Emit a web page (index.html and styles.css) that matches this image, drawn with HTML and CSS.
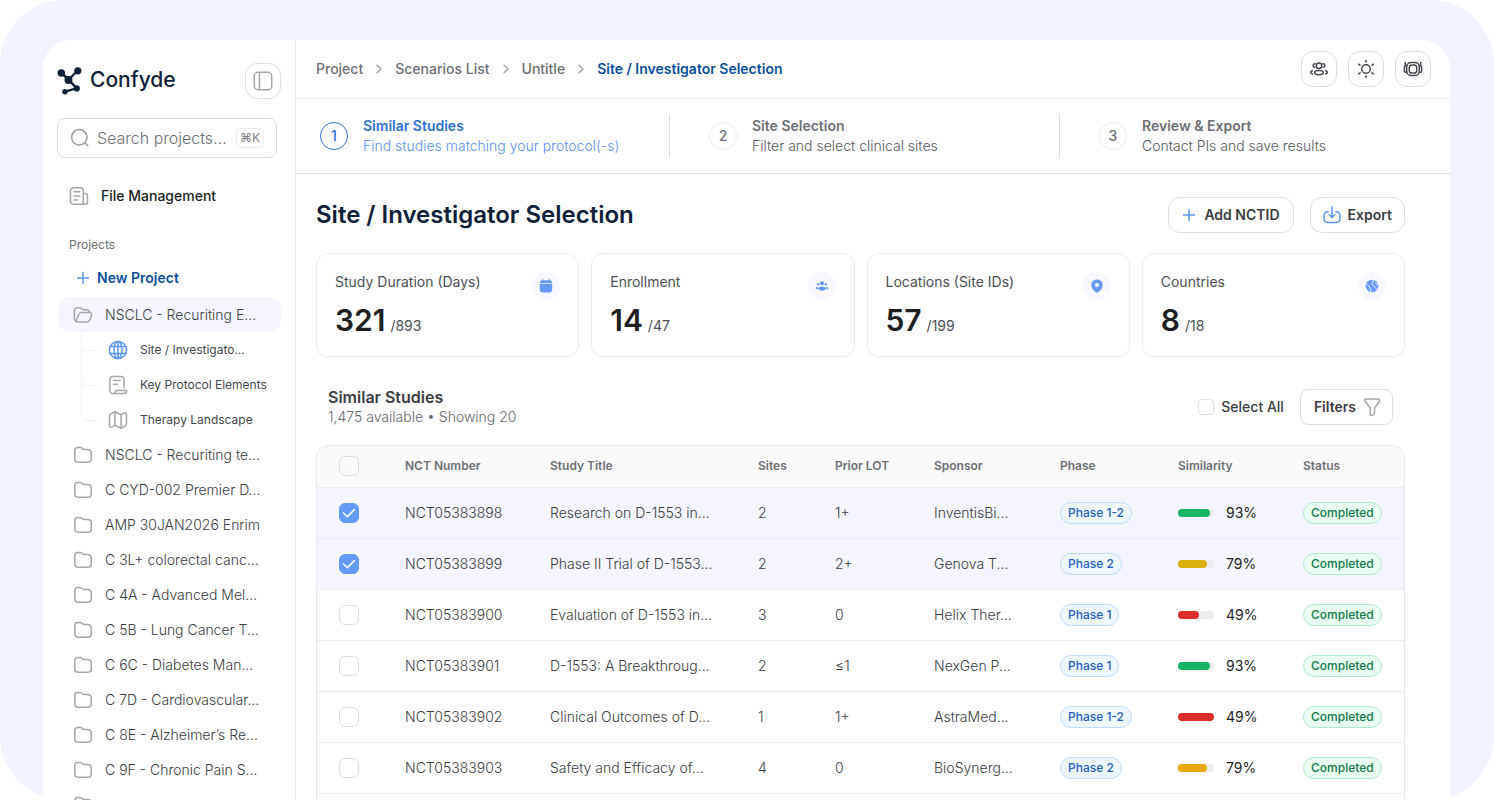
FILE: index.html
```html
<!DOCTYPE html>
<html lang="en">

<head>
  <meta charset="UTF-8" />
  <meta name="viewport" content="width=device-width, initial-scale=1.0" />
  <title>Confyde - Site / Investigator Selection</title>
  <link rel="stylesheet" href="styles.css">
</head>

<body>
  <!-- Shared icons -->
  <svg class="sprite" aria-hidden="true">
    <symbol id="icon-folder" viewBox="0 0 20 20">
      <path d="M1.8 5.6C1.8 3.6 2.9 2.4 4.9 2.4h2.2c1.3 0 1.9.5 2.6 1.3.5.6 1.1.9 2.1.9h2.6c2.4 0 3.9 1.4 3.9 3.8v5c0 2.5-1.4 3.9-3.9 3.9H5.7c-2.5 0-3.9-1.4-3.9-3.9z" />
    </symbol>
    <symbol id="icon-plus" viewBox="0 0 14 14">
      <path d="M7 1.5v11M1.5 7h11" />
    </symbol>
    <symbol id="icon-chevron" viewBox="0 0 8 12">
      <path d="M2 2.200 6 6l-4 3.800" />
    </symbol>
  </svg>

  <div class="frame">
    <div class="app">
      <aside class="sidebar">
        <div class="brand-row">
          <a class="brand" href="#">
            <svg class="brand-mark" viewBox="0 0 26 30" aria-hidden="true">
              <path d="M4.500 7 11.500 13.500 20.500 5M11.500 13.500 19.500 22.300 8 25.600" fill="none" stroke="currentColor" stroke-width="2.400" stroke-linejoin="round" />
              <circle cx="4.300" cy="7" r="3.700" />
              <circle cx="20.800" cy="4.800" r="3.600" />
              <circle cx="11.500" cy="13.900" r="4" />
              <circle cx="19.800" cy="22.400" r="3.100" />
              <circle cx="7.900" cy="25.800" r="2.700" />
            </svg>
            <span>Confyde</span>
          </a>
          <button class="icon-button muted" aria-label="Toggle sidebar">
            <svg class="icon" viewBox="0 0 20 20"><rect x="1.3" y="1.3" width="17.4" height="17.4" rx="3.8" /><path d="M6.500 1.500v17" /></svg>
          </button>
        </div>

        <label class="search">
          <svg class="icon" viewBox="0 0 20 20"><circle cx="9.3" cy="9.3" r="7.7" /><path d="m15 15 2.800 2.800" /></svg>
          <input type="text" placeholder="Search projects..." aria-label="Search projects" />
          <kbd>⌘K</kbd>
        </label>

        <a class="file-link" href="#">
          <svg class="icon" viewBox="0 0 20 20"><path d="M14.2 18.3H4.8c-2 0-3.3-1.2-3.3-3.3V5c0-2.1 1.2-3.3 3.3-3.3h6.1c2.1 0 3.3 1.2 3.3 3.3zM14.2 7.6h1.6c1.8 0 2.7.9 2.7 2.7V16c0 1.4-.8 2.3-2.1 2.3s-2.2-.9-2.2-2.3M5 5.8h5.8M5 9.9h5.8M5 14h3" /></svg>
          File Management
        </a>

        <h2 class="sidebar-heading">Projects</h2>
        <button class="new-project">
          <svg class="plus"><use href="#icon-plus" /></svg>
          New Project
        </button>

        <ul class="project-list">
          <li>
            <a class="project active" href="#">
              <svg class="icon" viewBox="0 0 20 20"><path d="M2.6 16.2C1.8 15.6 1.4 14.600 1.4 13.2V6c0-2 1-3.200 3-3.200h2.200c1 0 1.600.4 2.100 1.100.4.6.9.8 1.700.8h2.800c2.100 0 3.300 1 3.300 2.800M2.700 16.300c.5.400 1.200.6 2.100.6h9c1.700 0 2.600-.8 3.200-2.400l1.400-3.800c.7-2-.1-3.200-2-3.200H8.700c-1.600 0-2.500.7-3 2.200z" /></svg>
              NSCLC - Recuriting E...
            </a>
            <ul class="subnav">
              <li>
                <a class="current" href="#">
                  <svg class="icon" viewBox="0 0 20 20"><circle cx="10" cy="10" r="8.600" /><ellipse cx="10" cy="10" rx="4" ry="8.600" /><path d="M2.200 6.600h15.600M2.200 13.400h15.600M10 1.400v17.200" /></svg>
                  Site / Investigato...
                </a>
              </li>
              <li>
                <a href="#">
                  <svg class="icon" viewBox="0 0 20 20"><path d="M16 12.600V4.800C16 2.700 14.900 1.500 12.800 1.500H5.100C3 1.500 1.900 2.700 1.900 4.800v10.400c0 2.100 1.100 3.300 3.200 3.300M5.100 18.500c1.600 0 2.500-.8 2.500-2.300v-.8h11v.6c0 1.600-.9 2.500-2.500 2.500zM5.400 5.600h6.800M5.400 9.200h4" /></svg>
                  Key Protocol Elements
                </a>
              </li>
              <li>
                <a href="#">
                  <svg class="icon" viewBox="0 0 20 20"><path d="M1.500 6.300v8.900c0 2 1.200 2.500 2.700 1.700l2.700-1.600 6.200 3 4-2.200c1-.6 1.400-1.300 1.400-2.400V4.900c0-2-1.200-2.600-2.700-1.800l-2.700 1.600-6.200-3-4 2.200c-1 .6-1.400 1.300-1.400 2.400zM6.900 2v13.100M13.100 5v13" /></svg>
                  Therapy Landscape
                </a>
              </li>
            </ul>
          </li>
          <li><a class="project" href="#"><svg class="icon"><use href="#icon-folder" /></svg>NSCLC - Recuriting te...</a></li>
          <li><a class="project" href="#"><svg class="icon"><use href="#icon-folder" /></svg>C CYD-002 Premier D...</a></li>
          <li><a class="project" href="#"><svg class="icon"><use href="#icon-folder" /></svg>AMP 30JAN2026 Enrim</a></li>
          <li><a class="project" href="#"><svg class="icon"><use href="#icon-folder" /></svg>C 3L+ colorectal canc...</a></li>
          <li><a class="project" href="#"><svg class="icon"><use href="#icon-folder" /></svg>C 4A - Advanced Mel...</a></li>
          <li><a class="project" href="#"><svg class="icon"><use href="#icon-folder" /></svg>C 5B - Lung Cancer T...</a></li>
          <li><a class="project" href="#"><svg class="icon"><use href="#icon-folder" /></svg>C 6C - Diabetes Man...</a></li>
          <li><a class="project" href="#"><svg class="icon"><use href="#icon-folder" /></svg>C 7D - Cardiovascular...</a></li>
          <li><a class="project" href="#"><svg class="icon"><use href="#icon-folder" /></svg>C 8E - Alzheimer’s Re...</a></li>
          <li><a class="project" href="#"><svg class="icon"><use href="#icon-folder" /></svg>C 9F - Chronic Pain S...</a></li>
          <li><a class="project" href="#"><svg class="icon"><use href="#icon-folder" /></svg></a></li>
        </ul>
      </aside>

      <div class="main">
        <header class="topbar">
          <nav class="breadcrumbs" aria-label="Breadcrumb">
            <a href="#">Project</a>
            <svg class="chevron"><use href="#icon-chevron" /></svg>
            <a href="#">Scenarios List</a>
            <svg class="chevron"><use href="#icon-chevron" /></svg>
            <a href="#">Untitle</a>
            <svg class="chevron"><use href="#icon-chevron" /></svg>
            <a class="current" href="#">Site / Investigator Selection</a>
          </nav>
          <div class="topbar-actions">
            <button class="icon-button" aria-label="Team">
              <svg class="icon" viewBox="0 0 20 20"><circle cx="10" cy="6.700" r="2.800" /><ellipse cx="10" cy="13.600" rx="4.400" ry="2.200" /><path d="M6 4.800C3.700 4.700 3.400 7.800 5.500 8.300M14 4.800c2.300-.1 2.600 3 .5 3.500M3.400 11.800c-2.300.5-2.300 2.600 0 3.100M16.600 11.800c2.300.5 2.300 2.600 0 3.100" /></svg>
            </button>
            <button class="icon-button" aria-label="Theme">
              <svg class="icon" viewBox="0 0 20 20"><circle cx="10" cy="10" r="4.300" /><path d="M10 1.500v1.500M10 17v1.500M2.600 5.200l1.500.9M15.900 13.900l1.500.9M2.600 14.800l1.500-.9M15.900 6.100l1.500-.9" /></svg>
            </button>
            <button class="icon-button" aria-label="Account">
              <svg class="icon" viewBox="0 0 20 20"><rect x="3.700" y="3.500" width="12.600" height="13" rx="4.300" /><rect x="6.300" y="6" width="7.400" height="8" rx="2.600" /><path d="M3.700 6.800H2.600C1.800 6.800 1.400 7.300 1.400 8.100v3.800c0 .8.400 1.300 1.200 1.300h1.100M16.300 6.800h1.100c.8 0 1.200.5 1.200 1.300v3.800c0 .8-.4 1.300-1.200 1.300h-1.100M2.300 6.600V3.600M17.700 6.600V3.600" /></svg>
            </button>
          </div>
        </header>

        <ol class="stepper">
          <li class="step active">
            <span class="step-number">1</span>
            <div>
              <h3>Similar Studies</h3>
              <p>Find studies matching your protocol(-s)</p>
            </div>
          </li>
          <li class="step">
            <span class="step-number">2</span>
            <div>
              <h3>Site Selection</h3>
              <p>Filter and select clinical sites</p>
            </div>
          </li>
          <li class="step">
            <span class="step-number">3</span>
            <div>
              <h3>Review &amp; Export</h3>
              <p>Contact PIs and save results</p>
            </div>
          </li>
        </ol>

        <main class="content">
          <div class="title-row">
            <h1>Site / Investigator Selection</h1>
            <div class="title-actions">
              <button class="button">
                <svg class="plus"><use href="#icon-plus" /></svg>
                Add NCTID
              </button>
              <button class="button export">
                <svg class="icon" viewBox="0 0 20 20"><path d="M6.200 6.800C3.600 6.700 2.100 8.200 2.100 10.800v2.400c0 2.900 1.500 4.400 4.400 4.400h7c2.900 0 4.400-1.500 4.400-4.400v-2.400c0-2.600-1.500-4.100-4.100-4M10 1.800v10.500M7.200 9.800l2.800 2.700 2.800-2.700" /></svg>
                Export
              </button>
            </div>
          </div>

          <section class="cards">
            <div class="card">
              <div>
                <div class="card-label">Study Duration (Days)</div>
                <div class="card-value"><strong>321</strong> /893</div>
              </div>
              <span class="card-icon">
                <svg viewBox="0 0 14 14"><path d="M.8 4.300C.8 2.500 1.700 1.500 3 1.300V.7a.6.6 0 0 1 1.200 0v.5h5.600V.7a.6.6 0 0 1 1.200 0v.6c1.300.2 2.200 1.200 2.200 3z" /><path d="M.8 5h12.400v5.600c0 2-1.100 3-3.100 3H3.900c-2 0-3.100-1-3.100-3z" /></svg>
              </span>
            </div>
            <div class="card">
              <div>
                <div class="card-label">Enrollment</div>
                <div class="card-value"><strong>14</strong> /47</div>
              </div>
              <span class="card-icon">
                <svg viewBox="0 0 14 14"><circle cx="7" cy="4.200" r="2" /><ellipse cx="7" cy="9.600" rx="3.600" ry="2.100" /><circle cx="3.300" cy="5.200" r="1.200" /><circle cx="10.700" cy="5.200" r="1.200" /><ellipse cx="1.900" cy="9.200" rx="1.300" ry="1.100" /><ellipse cx="12.100" cy="9.200" rx="1.300" ry="1.100" /></svg>
              </span>
            </div>
            <div class="card">
              <div>
                <div class="card-label">Locations (Site IDs)</div>
                <div class="card-value"><strong>57</strong> /199</div>
              </div>
              <span class="card-icon">
                <svg viewBox="0 0 14 14"><path fill-rule="evenodd" d="M7 .4c3.300 0 5.700 2.300 5.700 5.500 0 3.100-2.300 5.500-4.400 7.300-.8.600-1.800.6-2.600 0C3.600 11.400 1.300 9 1.300 5.900 1.300 2.700 3.700.4 7 .4zm0 3.500a2 2 0 1 0 0 4 2 2 0 0 0 0-4z" /></svg>
              </span>
            </div>
            <div class="card">
              <div>
                <div class="card-label">Countries</div>
                <div class="card-value"><strong>8</strong> /18</div>
              </div>
              <span class="card-icon">
                <svg viewBox="0 0 14 14"><circle cx="7" cy="7" r="6.300" /><path class="land" d="M.8 5.200c1.600-.2 1.600 1.100 2.800 1.500 1.400.4.6 2 1.500 2.800.9.700.9 1.700.5 3.500M8.300.8C7.200 2.200 8.800 2.800 7.700 3.900c-1.100.9-.7 2 .4 2.400 1 .4.8 1.700 2 2.400 1 .6 1.700 1 1.700 2.200M13 5.200c-1.600.2-2-.4-2.700-1.400" /></svg>
              </span>
            </div>
          </section>

          <div class="table-toolbar">
            <div>
              <h2>Similar Studies</h2>
              <p>1,475 available • Showing 20</p>
            </div>
            <div class="table-actions">
              <label class="select-all"><input type="checkbox" class="small" /> Select All</label>
              <button class="button filters">
                Filters
                <svg class="icon" viewBox="0 0 20 20"><path d="M4.300 2h11.400c1.600 0 2.400 1.400 1.500 2.700l-3.700 5c-.7.900-1 1.600-1 2.700v3.700c0 .7-.3 1.200-.9 1.500l-1.600.7c-.9.400-1.700-.1-1.700-1.100v-4.800c0-1-.3-1.800-1-2.700l-3.900-5C1.900 3.400 2.700 2 4.300 2z" /></svg>
              </button>
            </div>
          </div>

          <div class="table-wrap">
            <table>
              <colgroup>
                <col class="col-check">
                <col class="col-nct">
                <col class="col-title">
                <col class="col-sites">
                <col class="col-lot">
                <col class="col-sponsor">
                <col class="col-phase">
                <col class="col-similarity">
                <col class="col-status">
              </colgroup>
              <thead>
                <tr>
                  <th><input type="checkbox" aria-label="Select all rows" /></th>
                  <th>NCT Number</th>
                  <th>Study Title</th>
                  <th>Sites</th>
                  <th>Prior LOT</th>
                  <th>Sponsor</th>
                  <th>Phase</th>
                  <th>Similarity</th>
                  <th>Status</th>
                </tr>
              </thead>
              <tbody>
                <tr class="selected">
                  <td><input type="checkbox" aria-label="Select NCT05383898" checked /></td>
                  <td>NCT05383898</td>
                  <td>Research on D-1553 in...</td>
                  <td>2</td>
                  <td>1+</td>
                  <td>InventisBi...</td>
                  <td><span class="badge phase">Phase 1-2</span></td>
                  <td><div class="similarity"><div class="bar"><div class="fill green" style="width: 88%"></div></div><span>93%</span></div></td>
                  <td><span class="badge status">Completed</span></td>
                </tr>
                <tr class="selected">
                  <td><input type="checkbox" aria-label="Select NCT05383899" checked /></td>
                  <td>NCT05383899</td>
                  <td>Phase II Trial of D-1553...</td>
                  <td>2</td>
                  <td>2+</td>
                  <td>Genova T...</td>
                  <td><span class="badge phase">Phase 2</span></td>
                  <td><div class="similarity"><div class="bar"><div class="fill yellow" style="width: 80%"></div></div><span>79%</span></div></td>
                  <td><span class="badge status">Completed</span></td>
                </tr>
                <tr>
                  <td><input type="checkbox" aria-label="Select NCT05383900" /></td>
                  <td>NCT05383900</td>
                  <td>Evaluation of D-1553 in...</td>
                  <td>3</td>
                  <td>0</td>
                  <td>Helix Ther...</td>
                  <td><span class="badge phase">Phase 1</span></td>
                  <td><div class="similarity"><div class="bar"><div class="fill red" style="width: 57%"></div></div><span>49%</span></div></td>
                  <td><span class="badge status">Completed</span></td>
                </tr>
                <tr>
                  <td><input type="checkbox" aria-label="Select NCT05383901" /></td>
                  <td>NCT05383901</td>
                  <td>D-1553: A Breakthroug...</td>
                  <td>2</td>
                  <td>≤1</td>
                  <td>NexGen P...</td>
                  <td><span class="badge phase">Phase 1</span></td>
                  <td><div class="similarity"><div class="bar"><div class="fill green" style="width: 88%"></div></div><span>93%</span></div></td>
                  <td><span class="badge status">Completed</span></td>
                </tr>
                <tr>
                  <td><input type="checkbox" aria-label="Select NCT05383902" /></td>
                  <td>NCT05383902</td>
                  <td>Clinical Outcomes of D...</td>
                  <td>1</td>
                  <td>1+</td>
                  <td>AstraMed...</td>
                  <td><span class="badge phase">Phase 1-2</span></td>
                  <td><div class="similarity"><div class="bar"><div class="fill red" style="width: 100%"></div></div><span>49%</span></div></td>
                  <td><span class="badge status">Completed</span></td>
                </tr>
                <tr>
                  <td><input type="checkbox" aria-label="Select NCT05383903" /></td>
                  <td>NCT05383903</td>
                  <td>Safety and Efficacy of...</td>
                  <td>4</td>
                  <td>0</td>
                  <td>BioSynerg...</td>
                  <td><span class="badge phase">Phase 2</span></td>
                  <td><div class="similarity"><div class="bar"><div class="fill amber" style="width: 80%"></div></div><span>79%</span></div></td>
                  <td><span class="badge status">Completed</span></td>
                </tr>
              </tbody>
            </table>
          </div>
        </main>
      </div>
    </div>
  </div>
</body>

</html>
```
FILE: styles.css
```css
/* Base resets & typography */
* {
  box-sizing: border-box;
  margin: 0;
  padding: 0;
}

body {
  font-family: Inter, "Liberation Sans", sans-serif;
  font-size: 14px;
  line-height: 20px;
  color: #3a3d42;
  background-color: #fff;
}

a {
  color: inherit;
  text-decoration: none;
}

ul,
ol {
  list-style: none;
}

button,
input {
  font: inherit;
  color: inherit;
}

button {
  cursor: pointer;
}

.sprite {
  position: absolute;
  width: 0;
  height: 0;
}

.icon,
.plus,
.chevron {
  flex-shrink: 0;
  fill: none;
  stroke: currentColor;
  stroke-width: 1.5;
  stroke-linecap: round;
  stroke-linejoin: round;
}

.icon {
  width: 20px;
  height: 20px;
}

.plus {
  width: 14px;
  height: 14px;
  color: #5c97f5;
}

/* Window frame */
.frame {
  height: 100vh;
  padding: 40px 44px 0 43px;
  background-color: #f0f4ff;
  border-radius: 64px;
}

.app {
  display: flex;
  height: 100%;
  background-color: #fff;
  border-radius: 28px 28px 0 0;
  overflow: hidden;
}

/* Sidebar */
.sidebar {
  flex: 0 0 253px;
  padding: 23px 14px 0;
  border-right: 1px solid #ececee;
  overflow: hidden;
}

.brand-row {
  display: flex;
  justify-content: space-between;
  align-items: flex-start;
}

.brand {
  display: flex;
  gap: 7px;
  color: #0f2138;
  font-size: 21px;
  font-weight: 500;
  line-height: 34px;
}

.brand-mark {
  width: 26px;
  height: 30px;
  margin-top: 3px;
  fill: currentColor;
}

.icon-button {
  display: flex;
  align-items: center;
  justify-content: center;
  width: 36px;
  height: 36px;
  background-color: #fff;
  border: 1px solid #dcdde0;
  border-radius: 12px;
  color: #43474d;
}

.icon-button.muted {
  color: #a3a6ab;
}

.search {
  display: flex;
  align-items: center;
  gap: 7px;
  height: 40px;
  margin: 19px 4px 0 0;
  padding: 0 12px;
  border: 1px solid #d8d9dc;
  border-radius: 8px;
  color: #9a9da2;
}

.search input {
  flex: 1;
  min-width: 0;
  border: none;
  outline: none;
  background: none;
  font-size: 16px;
  font-weight: 300;
}

.search input::placeholder {
  color: #6d7075;
}

.search kbd {
  padding: 0 3px;
  border: 1px solid #ececee;
  border-radius: 4px;
  color: #7a7d82;
  font: 12px/18px Inter, "DejaVu Sans", sans-serif;
}

.file-link {
  display: flex;
  align-items: center;
  gap: 12px;
  margin-top: 28px;
  padding-left: 12px;
  color: #1d1f23;
  font-weight: 500;
}

.file-link .icon {
  color: #a3a6ab;
}

.sidebar-heading {
  margin-top: 29px;
  padding-left: 12px;
  color: #6d7075;
  font-size: 12px;
  font-weight: 400;
}

.new-project {
  display: flex;
  align-items: center;
  gap: 7px;
  margin-top: 13px;
  padding-left: 19px;
  background: none;
  border: none;
  color: #0b4f9c;
  font-weight: 600;
}

.project-list {
  margin-top: 9px;
}

.project {
  display: flex;
  align-items: center;
  gap: 12px;
  height: 35px;
  margin-left: 1px;
  padding-left: 15px;
  border-radius: 12px;
  font-weight: 300;
}

.project .icon,
.subnav .icon {
  color: #a3a6ab;
}

.project.active {
  background-color: #f4f5ff;
}

.subnav {
  margin-left: 24px;
}

.subnav li {
  position: relative;
  padding-left: 27px;
}

/* tree connector lines */
.subnav li::before {
  content: "";
  position: absolute;
  left: 0;
  top: 0;
  width: 15px;
  height: 18px;
  border-left: 1px solid #f1f1f3;
  border-bottom: 1px solid #f1f1f3;
  border-bottom-left-radius: 6px;
}

.subnav li:not(:last-child)::after {
  content: "";
  position: absolute;
  left: 0;
  top: 0;
  height: 100%;
  border-left: 1px solid #f1f1f3;
}

.subnav a {
  display: flex;
  align-items: center;
  gap: 12px;
  height: 35px;
  color: #43474d;
  font-size: 12px;
}

.subnav .current .icon {
  color: #5c97f5;
}

/* Top bar */
.main {
  flex: 1;
  min-width: 0;
  display: flex;
  flex-direction: column;
}

.topbar {
  display: flex;
  align-items: center;
  justify-content: space-between;
  height: 59px;
  padding: 0 19px 0 20px;
  border-bottom: 1px solid #ececee;
}

.breadcrumbs {
  display: flex;
  align-items: center;
  gap: 12px;
  color: #6d7075;
  font-weight: 500;
}

.breadcrumbs .current {
  color: #0b4f9c;
  font-weight: 600;
}

.chevron {
  width: 8px;
  height: 12px;
  color: #a3a6ab;
}

.topbar-actions {
  display: flex;
  gap: 11px;
}

/* Stepper */
.stepper {
  display: grid;
  grid-template-columns: 374fr 390fr 390fr;
  padding: 15px 0;
  border-bottom: 1px solid #d8d9dc;
}

.step {
  display: flex;
  align-items: center;
  gap: 15px;
  padding: 2px 0 2px 39px;
  color: #6d7075;
}

.step:first-child {
  padding-left: 24px;
}

.step:not(:last-child) {
  border-right: 1px solid #dcdde0;
}

.step-number {
  width: 28px;
  height: 28px;
  border: 1px solid #ececee;
  border-radius: 50%;
  font-weight: 500;
  line-height: 26px;
  text-align: center;
}

.step h3 {
  font-size: 14px;
  font-weight: 600;
}

.step p {
  color: #56595f;
  font-weight: 300;
}

.step.active .step-number,
.step.active h3 {
  color: #2f6fd0;
  border-color: #2f6fd0;
}

.step.active p {
  color: #5c93f5;
}

/* Content */
.content {
  flex: 1;
  display: flex;
  flex-direction: column;
  padding: 23px 45px 0 20px;
}

.title-row,
.table-toolbar {
  display: flex;
  align-items: center;
  justify-content: space-between;
}

h1 {
  color: #0f2138;
  font-size: 24px;
  font-weight: 600;
}

.title-actions,
.table-actions {
  display: flex;
  align-items: center;
  gap: 16px;
}

.button {
  display: flex;
  align-items: center;
  gap: 8px;
  height: 36px;
  padding: 0 13px;
  background-color: #fff;
  border: 1px solid #dcdde0;
  border-radius: 12px;
  color: #3a3d42;
  font-weight: 600;
}

.button.export {
  gap: 6px;
  padding: 0 12px 0 11px;
}

.button.export .icon {
  color: #5c97f5;
}

.button.filters {
  gap: 6px;
  padding: 0 10px 0 13px;
  border-radius: 8px;
}

.button.filters .icon {
  color: #a3a6ab;
}

.cards {
  display: grid;
  grid-template-columns: repeat(4, 1fr);
  gap: 12px;
  margin-top: 20px;
}

.card {
  display: flex;
  align-items: flex-start;
  justify-content: space-between;
  height: 104px;
  padding: 18px;
  border: 1px solid #ececee;
  border-radius: 12px;
  box-shadow: 0 1px 2px rgba(0, 0, 0, 0.03);
  color: #4b4f55;
}

.card-value {
  margin-top: 8px;
  line-height: 40px;
}

.card-value strong {
  margin-right: 1px;
  color: #1d1f23;
  font-size: 30px;
  font-weight: 600;
}

.card-icon {
  display: flex;
  align-items: center;
  justify-content: center;
  width: 28px;
  height: 28px;
  border-radius: 50%;
  background-color: #f7f8ff;
}

.card-icon svg {
  width: 14px;
  height: 14px;
  fill: #6699fa;
}

.card-icon .land {
  fill: none;
  stroke: #f7f8ff;
  stroke-width: 1;
}

/* Studies table */
.table-toolbar {
  margin-top: 30px;
  padding: 0 12px;
}

.table-toolbar h2 {
  color: #3a3d42;
  font-size: 16px;
  font-weight: 600;
}

.table-toolbar p {
  color: #66696e;
  font-weight: 300;
}

.select-all {
  display: flex;
  align-items: center;
  gap: 7px;
  color: #3a3d42;
  font-weight: 500;
}

input[type=checkbox] {
  appearance: none;
  display: grid;
  place-content: center;
  width: 20px;
  height: 20px;
  background-color: transparent;
  border: 1px solid #dcdde0;
  border-radius: 6px;
}

input[type=checkbox].small {
  width: 16px;
  height: 16px;
  border-radius: 4px;
}

input[type=checkbox]:checked {
  background-color: #649bfb;
  border-color: #649bfb;
}

input[type=checkbox]:checked::before {
  content: "";
  width: 10px;
  height: 5px;
  margin-bottom: 3px;
  border-left: 2px solid #fff;
  border-bottom: 2px solid #fff;
  border-radius: 1px;
  transform: rotate(-45deg);
}

.table-wrap {
  flex: 1;
  margin-top: 18px;
  border: 1px solid #e6e7e9;
  border-bottom: none;
  border-radius: 14px 14px 0 0;
  overflow: hidden;
}

table {
  width: 100%;
  table-layout: fixed;
  border-collapse: collapse;
}

.col-check { width: 66px; }
.col-nct { width: 145px; }
.col-title { width: 208px; }
.col-sites { width: 77px; }
.col-lot { width: 99px; }
.col-sponsor { width: 126px; }
.col-phase { width: 118px; }
.col-similarity { width: 125px; }
.col-status { width: 123px; }

th,
td {
  padding: 0 0 0 22px;
  text-align: left;
  white-space: nowrap;
  border-bottom: 1px solid #ececee;
}

th {
  height: 41px;
  background-color: #fafafa;
  color: #6d7075;
  font-size: 12px;
  font-weight: 600;
}

td {
  height: 51px;
  font-weight: 300;
}

tr.selected td {
  background-color: #f4f5ff;
}

.badge {
  display: inline-block;
  padding: 0 7px;
  border: 1px solid;
  border-radius: 11px;
  font-size: 12px;
  font-weight: 500;
  line-height: 20px;
}

.badge.phase {
  color: #2660c4;
  background-color: #eef7ff;
  border-color: #bcdcfb;
}

.badge.status {
  color: #14794a;
  background-color: #eafdf2;
  border-color: #b0ebcb;
}

.similarity {
  display: flex;
  align-items: center;
  gap: 12px;
  color: #1d1f23;
  font-weight: 400;
}

.similarity span {
  width: 30px;
  text-align: right;
}

.bar {
  width: 36px;
  height: 8px;
  background-color: #ececee;
  border-radius: 4px;
}

.fill {
  height: 8px;
  border-radius: 4px;
}

.fill.green { background-color: #18b566; }
.fill.yellow { background-color: #dcb00c; }
.fill.red { background-color: #dc2f2b; }
.fill.amber { background-color: #e9ab0c; }
```
